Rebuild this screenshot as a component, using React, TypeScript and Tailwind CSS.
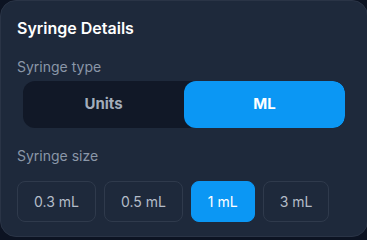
import React, { useState } from 'react';

const SIZES = ['0.3 mL', '0.5 mL', '1 mL', '3 mL'];

export default function App() {
  const [type, setType] = useState<'units' | 'ml'>('ml');
  const [size, setSize] = useState('1 mL');

  return (
    <div className="h-[240px] w-[367px] overflow-hidden bg-[#0c1322] font-['Inter','Liberation_Sans',sans-serif]">
      <div className="w-[368px] h-[237px] rounded-2xl border border-[#2a3446] bg-[#1e293b] px-4 pt-[15px]">
        <h2 className="text-base leading-[24px] font-semibold text-white">Syringe Details</h2>

        <div className="mt-[17px] text-sm leading-5 text-[#8b97a8]">Syringe type</div>
        <div className="mt-1 px-1.5">
          <div className="flex h-[47px] rounded-xl bg-[#111827] overflow-hidden">
            <button
              onClick={() => setType('units')}
              className={`flex-1 rounded-xl text-[15px] font-bold ${
                type === 'units' ? 'bg-[#0b97f4] text-white' : 'text-[#a3adbb]'
              }`}
            >
              Units
            </button>
            <button
              onClick={() => setType('ml')}
              className={`flex-1 rounded-xl text-[15px] font-bold ${
                type === 'ml' ? 'bg-[#0b97f4] text-white' : 'text-[#a3adbb]'
              }`}
            >
              ML
            </button>
          </div>
        </div>

        <div className="mt-[18px] text-sm leading-5 text-[#8b97a8]">Syringe size</div>
        <div className="mt-[15px] flex gap-2">
          {SIZES.map((s) => (
            <button
              key={s}
              onClick={() => setSize(s)}
              className={`h-[41px] rounded-lg border px-4 text-sm ${
                size === s
                  ? 'border-[#0b97f4] bg-[#0b97f4] text-white'
                  : 'border-[#2f3a4c] text-[#b4bcc8]'
              }`}
            >
              {s}
            </button>
          ))}
        </div>
      </div>
    </div>
  );
}
